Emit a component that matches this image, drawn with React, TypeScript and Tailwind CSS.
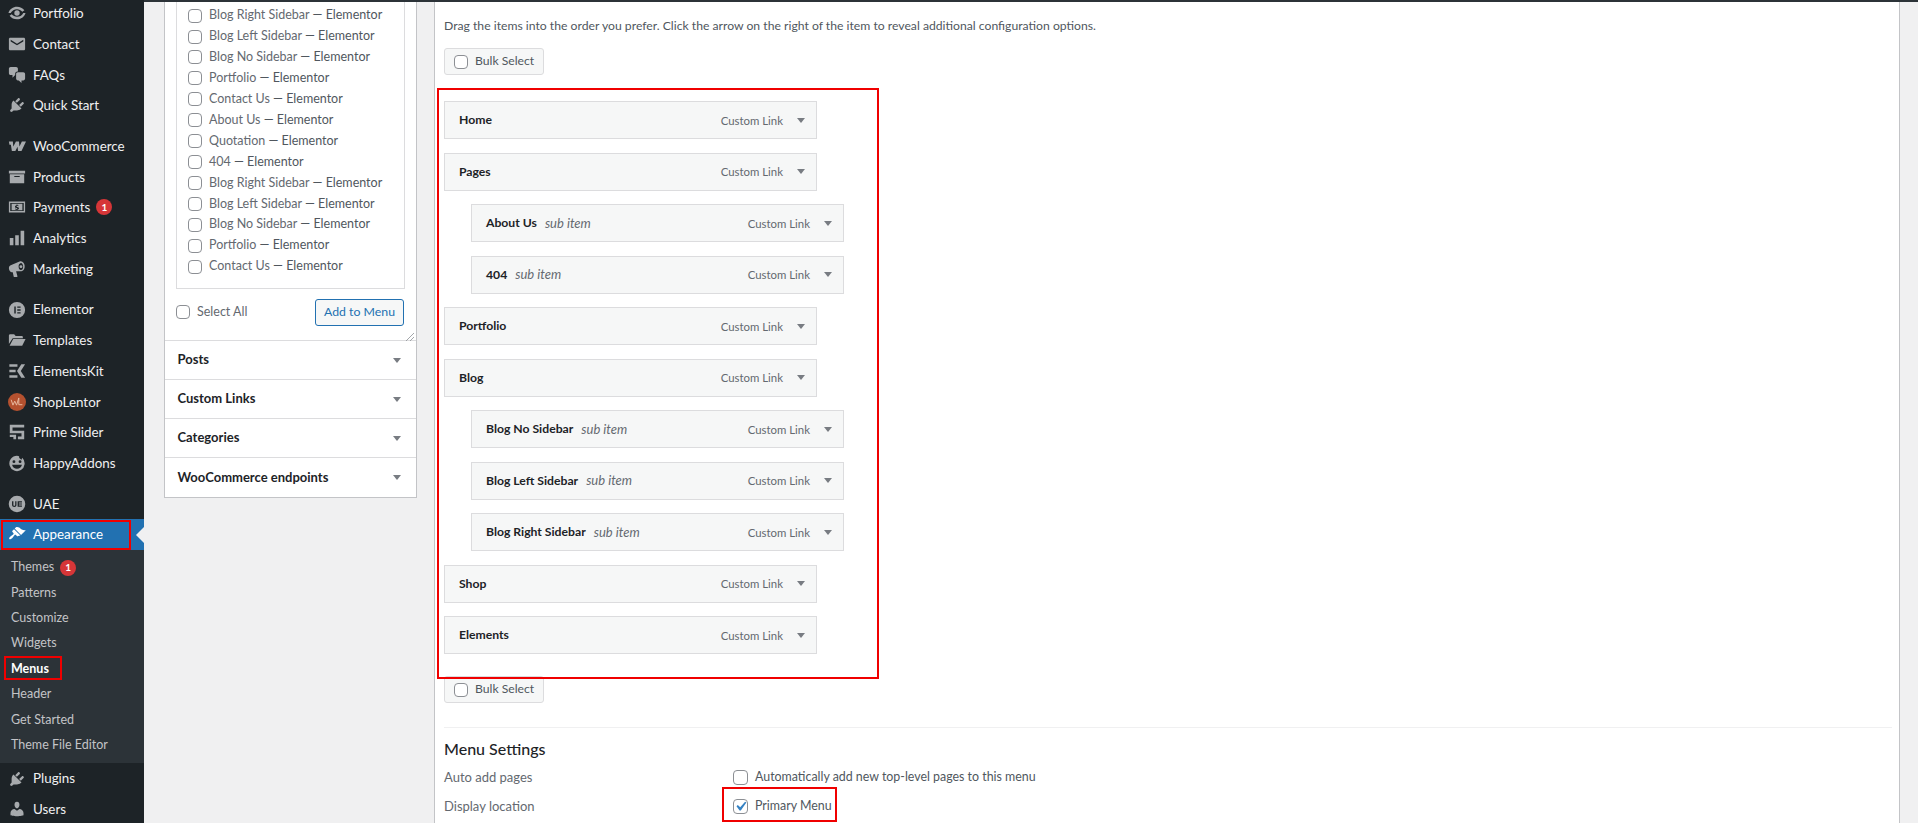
import type { ReactNode } from 'react';

const font = { fontFamily: 'Lato, "Noto Sans", sans-serif' };

function Glyph({ children, view = '0 0 20 20' }: { children: ReactNode; view?: string }) {
  return (
    <svg viewBox={view} className="h-[18px] w-[18px] shrink-0" fill="currentColor">
      {children}
    </svg>
  );
}

const plug = (
  <path d="M13.11 4.36L9.87 7.6 8 5.73l3.24-3.24c.35-.34 1.05-.2 1.56.32.52.51.66 1.21.31 1.55zm-8 1.77l.91-1.12 9.01 9.01-1.19.84c-.71.71-2.63 1.16-3.82 1.16H6.14L4.9 17.26c-.59.59-1.54.59-2.12 0-.59-.58-.59-1.53 0-2.12l1.24-1.24v-3.88c0-1.13.4-3.19 1.09-3.89zm7.26 3.97l3.24-3.24c.34-.35 1.04-.21 1.55.31.52.51.66 1.21.31 1.55l-3.24 3.25z" />
);

const icons: Record<string, ReactNode> = {
  portfolio: (
    <Glyph>
      <circle cx="10" cy="10" r="3" />
      <path d="M.5 10C2 5.500 5.500 3 10 3c3.300 0 6.200 1.400 8.200 4l-2.300 1.500C14.400 6.700 12.400 5.700 10 5.700c-3 0-5.500 1.500-7 4.300zM19.500 10c-1.500 4.500-5 7-9.500 7-3.300 0-6.200-1.400-8.200-4l2.300-1.500c1.500 1.800 3.500 2.800 5.900 2.800 3 0 5.500-1.500 7-4.300z" />
    </Glyph>
  ),
  contact: (
    <Glyph>
      <path fillRule="evenodd" d="M2.500 3h15c.800 0 1.500.700 1.500 1.500v11c0 .800-.700 1.500-1.500 1.500h-15C1.700 17 1 16.300 1 15.500v-11C1 3.700 1.700 3 2.500 3zM3 5.400v1.800l7 4.300 7-4.300V5.400l-7 4.300z" />
    </Glyph>
  ),
  chat: (
    <Glyph>
      <path d="M11 6h-.82C9.070 6 8 7.200 8 8.160V10l-3 3v-3H3c-1.100 0-2-.900-2-2V3c0-1.100.900-2 2-2h6c1.100 0 2 .900 2 2v3zm0 1h6c1.100 0 2 .900 2 2v5c0 1.100-.900 2-2 2h-2v3l-3-3h-1c-1.100 0-2-.900-2-2V9c0-1.100.900-2 2-2z" />
    </Glyph>
  ),
  plug: <Glyph>{plug}</Glyph>,
  woo: (
    <Glyph>
      <path d="M1 5h4.400l.5 5.600L8.800 5h3.400l.5 5.600L15.400 5H20l-5 10.500h-3.800l-.6-4.800-2.400 4.800H4.300L3.200 8.500H1.600z" />
    </Glyph>
  ),
  archive: (
    <Glyph>
      <path d="M19 3v3H1V3h18zM2 7h16v10H2V7zm11 3V9H7v1h6z" />
    </Glyph>
  ),
  payments: (
    <Glyph>
      <path fillRule="evenodd" d="M1 4h18v12H1zm1.500 1.500v9h15v-9z" />
      <path fillRule="evenodd" d="M4 6.500h12v7H4zm6.500.700h-1v.900c-1 .100-1.700.700-1.700 1.500 0 1 .900 1.300 1.700 1.500.600.200 1 .300 1 .600s-.400.500-.900.500-1-.200-1.500-.500l-.400.800c.500.300 1 .500 1.800.600v.700h1v-.800c1-.100 1.700-.700 1.700-1.500 0-1-.900-1.300-1.700-1.500-.600-.200-1-.300-1-.600s.300-.500.800-.500c.400 0 .900.100 1.300.400l.400-.800c-.500-.300-.900-.400-1.500-.500z" />
    </Glyph>
  ),
  analytics: (
    <Glyph>
      <path d="M18 18V2h-4v16h4zm-6 0V7H8v11h4zm-6 0v-8H2v8h4z" />
    </Glyph>
  ),
  marketing: (
    <Glyph>
      <path fillRule="evenodd" d="M13.500 1.500c2.700-.700 4.700 2 5 5 .300 2.700-.800 5.600-3.500 6H9l1.500 5.500c.100.500-.200 1-.800 1H7.200c-.500 0-.800-.300-.900-.800L5.300 13.500H4c-1.800-.200-3-2.100-3-4.200 0-1.700.800-3 2-3.400zM14 3.500c-1.700.300-2.400 2.200-2.200 4.200.2 2 1.300 3.700 2.900 3.400 1.600-.300 2.300-2.200 2.100-4.100-.2-2-1.300-3.800-2.800-3.500z" />
      <circle cx="14.400" cy="7.400" r="1.600" />
    </Glyph>
  ),
  elementor: (
    <Glyph>
      <path fillRule="evenodd" d="M10 1a9 9 0 100 18 9 9 0 000-18zM7 6h1.600v8H7zm3.300 0H14v1.600h-3.700zm0 3.200H14v1.600h-3.700zm0 3.200H14V14h-3.700z" />
    </Glyph>
  ),
  folder: (
    <Glyph>
      <path d="M1 5c0-.800.600-1.500 1.400-1.500h4.400L8.500 5.500h6.700c.800 0 1.300.600 1.300 1.300V8H5.200L1 14.500z" />
      <path d="M5.800 9H19.500l-3.700 7.500H1.800z" />
    </Glyph>
  ),
  ekit: (
    <Glyph>
      <path d="M1.500 2.500h9v2.800h-9zM1.500 8.600h7v2.800h-7zM1.500 14.700h9v2.800h-9zM19 2.500h-4.200L10 10l4.800 7.500H19L14.200 10z" />
    </Glyph>
  ),
  lentor: (
    <svg viewBox="0 0 20 20" className="h-[18px] w-[18px] shrink-0">
      <circle cx="10" cy="10" r="10" fill="#b4512f" />
      <path d="M3.500 7.500l2 6 2-4.500 2 4.500 2.500-8v7.500h4" fill="none" stroke="#e8b9a0" strokeWidth="1.100" />
    </svg>
  ),
  prime: (
    <Glyph>
      <path d="M2 2h16v3H5v3.500h13V18h-7v-3h4v-3.500H2zM2 13h7v5H6v-2.500H2z" />
    </Glyph>
  ),
  happy: (
    <Glyph>
      <path fillRule="evenodd" d="M10 2a8.500 8.500 0 105.800 2.300L15 6.500l-2.500-2-.2-1.900C11.600 2.200 10.800 2 10 2zM5 8.500a1.600 1.600 0 113.200 0 1.600 1.600 0 01-3.200 0zm6.800 0a1.600 1.600 0 113.200 0 1.600 1.600 0 01-3.200 0zM4.500 12h11c-.600 2.800-2.800 4.500-5.500 4.500S5.100 14.800 4.500 12z" />
    </Glyph>
  ),
  uae: (
    <Glyph>
      <path fillRule="evenodd" d="M10 .8a9.200 9.200 0 100 18.400A9.200 9.200 0 0010 .8zM4.500 7H6v4c0 .600.300 1 1 1s1-.400 1-1V7h1.400v4.200c0 1.300-1 2.100-2.400 2.100s-2.500-.800-2.500-2.100zm6.200 0h4.800v1.300h-3.400v1.100h3.400v1.200h-3.400v1.200h3.400V13h-4.800z" />
    </Glyph>
  ),
  appearance: (
    <Glyph>
      <path d="M14.480 11.060L7.410 3.990l1.500-1.500c.5-.56 2.300-.47 3.510.32 1.210.8 1.430 1.280 2.910 2.100 1.180.64 2.450 1.260 4.450.85zm-.71.71L6.700 4.700 4.930 6.470c-.39.39-.39 1.020 0 1.410l1.060 1.060c.39.39.39 1.030 0 1.420-.6.6-1.430 1.110-2.210 1.690-.35.26-.7.53-1.010.84C1.430 13.710.96 15.120 1.500 15.660c.54.54 1.950.07 3.360-1.340.31-.31.58-.66.84-1.010.58-.78 1.090-1.610 1.690-2.210.39-.39 1.030-.39 1.420 0l1.060 1.060c.39.39 1.020.39 1.410 0z" />
    </Glyph>
  ),
  users: (
    <Glyph>
      <path d="M10 9.250c-2.270 0-2.730-3.440-2.730-3.440C7 4.020 7.820 2 9.970 2c2.160 0 2.980 2.020 2.710 3.810 0 0-.41 3.440-2.680 3.440zm0 2.570L12.720 10c2.390 0 4.520 2.330 4.520 4.530v2.490s-3.650 1.130-7.240 1.130c-3.650 0-7.240-1.130-7.240-1.130v-2.490c0-2.250 1.940-4.480 4.470-4.480z" />
    </Glyph>
  ),
};

const menuGroups: { icon: string; label: string; badge?: boolean }[][] = [
  [
    { icon: 'portfolio', label: 'Portfolio' },
    { icon: 'contact', label: 'Contact' },
    { icon: 'chat', label: 'FAQs' },
    { icon: 'plug', label: 'Quick Start' },
  ],
  [
    { icon: 'woo', label: 'WooCommerce' },
    { icon: 'archive', label: 'Products' },
    { icon: 'payments', label: 'Payments', badge: true },
    { icon: 'analytics', label: 'Analytics' },
    { icon: 'marketing', label: 'Marketing' },
  ],
  [
    { icon: 'elementor', label: 'Elementor' },
    { icon: 'folder', label: 'Templates' },
    { icon: 'ekit', label: 'ElementsKit' },
    { icon: 'lentor', label: 'ShopLentor' },
    { icon: 'prime', label: 'Prime Slider' },
    { icon: 'happy', label: 'HappyAddons' },
  ],
];

const subMenu = ['Themes', 'Patterns', 'Customize', 'Widgets', 'Menus', 'Header', 'Get Started', 'Theme File Editor'];

const pages = [
  'Blog Right Sidebar',
  'Blog Left Sidebar',
  'Blog No Sidebar',
  'Portfolio',
  'Contact Us',
  'About Us',
  'Quotation',
  '404',
  'Blog Right Sidebar',
  'Blog Left Sidebar',
  'Blog No Sidebar',
  'Portfolio',
  'Contact Us',
];

const menuItems = [
  { title: 'Home' },
  { title: 'Pages' },
  { title: 'About Us', sub: true },
  { title: '404', sub: true },
  { title: 'Portfolio' },
  { title: 'Blog' },
  { title: 'Blog No Sidebar', sub: true },
  { title: 'Blog Left Sidebar', sub: true },
  { title: 'Blog Right Sidebar', sub: true },
  { title: 'Shop' },
  { title: 'Elements' },
];

function Badge() {
  return (
    <span className="ml-[6px] flex h-[16px] w-[16px] items-center justify-center rounded-full bg-[#d63638] text-[10px] font-bold text-white">
      1
    </span>
  );
}

function MenuRow({ icon, label, badge }: { icon: string; label: string; badge?: boolean }) {
  return (
    <div className="flex h-[30.7px] items-center text-[13.4px] text-[#f0f0f1]">
      <span className="flex w-[33px] justify-center pl-[1px] text-[#a7aaad]">{icons[icon]}</span>
      <span>{label}</span>
      {badge && <Badge />}
    </div>
  );
}

function Checkbox({ checked, large }: { checked?: boolean; large?: boolean }) {
  return (
    <span className={`flex shrink-0 items-center justify-center rounded-[4px] border border-[#8c8f94] bg-white ${large ? 'h-[15px] w-[15px]' : 'h-[14px] w-[14px]'}`}>
      {checked && (
        <svg viewBox="0 0 20 20" className="h-[19px] w-[19px] shrink-0 text-[#3582c4]" fill="currentColor">
          <path d="M14.830 4.890l1.340.940-5.810 8.380H9.020L5.780 9.670l1.340-1.250 2.570 2.400z" />
        </svg>
      )}
    </span>
  );
}

function Caret() {
  return (
    <svg viewBox="0 0 8 5" className="h-[5px] w-[8px] shrink-0 text-[#787c82]" fill="currentColor">
      <polygon points="0,0 8,0 4,5" />
    </svg>
  );
}

function BulkSelect() {
  return (
    <div className="flex h-[27px] w-[100px] items-center gap-[7px] rounded-[3px] border border-[#dcdcde] bg-[#f6f7f7] pl-[9px] text-[12.2px] text-[#50575e]">
      <Checkbox />
      <span>Bulk Select</span>
    </div>
  );
}

function MenuItem({ title, sub }: { title: string; sub?: boolean }) {
  return (
    <div
      className={`flex h-[38px] w-[373px] items-center border border-[#dcdcde] bg-[#f6f7f7] pl-[14px] pr-[11px] ${sub ? 'ml-[27px]' : ''}`}
    >
      <span className="pt-[1px] text-[12.2px] font-bold text-[#1d2327]">{title}</span>
      {sub && <span className="ml-[8px] pt-[1px] text-[13px] italic text-[#646970]">sub item</span>}
      <span className="ml-auto mr-[14px] pt-[1px] text-[11.4px] text-[#646970]">Custom Link</span>
      <Caret />
    </div>
  );
}

function Accordion({ title, last }: { title: string; last?: boolean }) {
  return (
    <div className={`flex h-[39px] items-center justify-between pl-[12.500px] pr-[15px] text-[13px] font-bold text-[#1d2327] ${last ? '' : 'border-b border-[#dcdcde]'}`}>
      <span>{title}</span>
      <Caret />
    </div>
  );
}

export default function App() {
  return (
    <div className="flex h-[823px] overflow-hidden bg-[#f0f0f1]" style={font}>
      <aside className="relative w-[144px] shrink-0 bg-[#1d2327]">
        <div className="-mt-[2px] flex flex-col gap-[10px]">
          {menuGroups.map((group) => (
            <div key={group[0].label}>
              {group.map((item) => (
                <MenuRow key={item.label} {...item} />
              ))}
            </div>
          ))}
          <div>
            <MenuRow icon="uae" label="UAE" />
            <div className="relative flex h-[30.7px] items-center bg-[#2271b1] text-[13.4px] text-white">
              <span className="flex w-[33px] justify-center pl-[1px]">{icons.appearance}</span>
              <span>Appearance</span>
              <span className="absolute right-0 top-[8px] h-0 w-0 border-y-[8px] border-r-[8px] border-y-transparent border-r-[#f0f0f1]" />
              <span className="absolute bottom-0 left-[1px] top-[1px] w-[130px] border-2 border-[#f00000]" />
            </div>
            <div className="bg-[#2c3338] py-[5.200px] text-[12.5px] text-[#c3c4c7]">
              {subMenu.map((label) => (
                <div key={label} className={`relative flex h-[25.4px] items-center pl-[11px] ${label === 'Menus' ? 'font-bold text-white' : ''}`}>
                  <span>{label}</span>
                  {label === 'Themes' && <Badge />}
                  {label === 'Menus' && <span className="absolute left-[4px] top-[0px] h-[24px] w-[58px] border-2 border-[#f00000]" />}
                </div>
              ))}
            </div>
            <MenuRow icon="plug" label="Plugins" />
            <MenuRow icon="users" label="Users" />
          </div>
        </div>
      </aside>

      <div className="flex min-w-0 flex-1 flex-col">
        <div className="h-[2px] shrink-0 bg-[#2c3338]" />
        <div className="flex min-h-0 flex-1 items-start pl-[20px] pr-[18px]">
          <section className="relative w-[253px] shrink-0 border-x border-b border-[#c3c4c7] bg-white">
            <div className="mx-[11px] border-x border-b border-[#dcdcde] pb-[10.500px] pl-[11px] pt-[3.200px]">
              {pages.map((page, index) => (
                <div key={`${page}-${index}`} className="flex h-[20.930px] items-center gap-[7px] text-[12.500px] text-[#646970]">
                  <Checkbox />
                  <span>
                    {page} <span className="text-[#50575e]">— Elementor</span>
                  </span>
                </div>
              ))}
            </div>
            <div className="flex h-[52.500px] items-start justify-between border-b border-[#dcdcde] pl-[11px] pr-[12px] pt-[10px]">
              <div className="flex h-[27px] items-center gap-[7px] text-[12.500px] text-[#646970]">
                <Checkbox />
                <span>Select All</span>
              </div>
              <span className="flex h-[27px] w-[89px] items-center justify-center rounded-[3px] border border-[#2271b1] bg-[#f6f7f7] text-[12.300px] text-[#2271b1]">
                Add to Menu
              </span>
            </div>
            <svg viewBox="0 0 8 8" className="absolute right-[2px] top-[331px] h-[8px] w-[8px] text-[#8c8f94]" fill="none" stroke="currentColor" strokeWidth="0.800">
              <path d="M0 8L8 0M4 8L8 4" />
            </svg>
            <Accordion title="Posts" />
            <Accordion title="Custom Links" />
            <Accordion title="Categories" />
            <Accordion title="WooCommerce endpoints" last />
          </section>

          <main className="relative ml-[17px] h-full min-w-0 flex-1 border-x border-[#c3c4c7] bg-white pl-[9px] pr-[7px] pt-[15px] text-[#50575e]">
            <p className="h-[18px] text-[12.2px] leading-[18px]">
              Drag the items into the order you prefer. Click the arrow on the right of the item to reveal additional configuration options.
            </p>
            <div className="mt-[13px]">
              <BulkSelect />
            </div>
            <div className="mt-[26px] flex flex-col gap-[13.500px]">
              {menuItems.map((item) => (
                <MenuItem key={item.title} {...item} />
              ))}
            </div>
            <div className="mt-[22px]">
              <BulkSelect />
            </div>
            <div className="mt-[24px] border-t border-[#f0f0f1] pt-[10px]">
              <h3 className="text-[16px] font-medium leading-[22px] text-[#1d2327]">Menu Settings</h3>
              <div className="mt-[3px] flex h-[29px] items-center">
                <span className="w-[289px] text-[13px] text-[#646970]">Auto add pages</span>
                <Checkbox large />
                <span className="ml-[7px] text-[12.4px]">Automatically add new top-level pages to this menu</span>
              </div>
              <div className="flex h-[29px] items-center">
                <span className="w-[289px] text-[13px] text-[#646970]">Display location</span>
                <Checkbox large checked />
                <span className="ml-[7px] text-[12.4px]">Primary Menu</span>
              </div>
            </div>
            <span className="pointer-events-none absolute left-[2px] top-[86px] h-[591px] w-[442px] border-2 border-[#f00000]" />
            <span className="pointer-events-none absolute left-[287px] top-[785px] h-[35px] w-[115px] border-2 border-[#f00000]" />
          </main>
        </div>
      </div>
    </div>
  );
}
